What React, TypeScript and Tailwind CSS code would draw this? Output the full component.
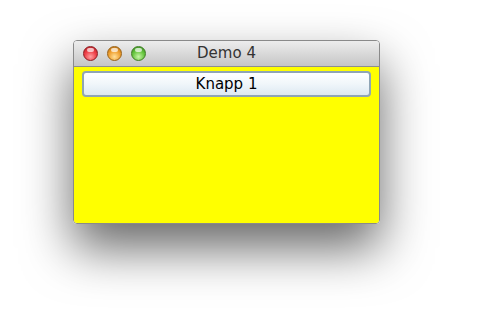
export default function App() {
  const lights = [
    'bg-[radial-gradient(circle_at_50%_75%,#ffa0a0_0%,#ee4048_50%,#b01d22_100%)] border-[#8e1b1f]',
    'bg-[radial-gradient(circle_at_50%_75%,#ffe09a_0%,#f0a030_50%,#b06a10_100%)] border-[#9a6115]',
    'bg-[radial-gradient(circle_at_50%_75%,#c8f5a8_0%,#68c640_50%,#33841e_100%)] border-[#3f7f24]',
  ];

  return (
    <div className="w-[491px] h-[323px] bg-white pt-[40px] pl-[73px] font-['DejaVu_Sans',sans-serif]">
      <div className="w-[307px] h-[184px] flex flex-col rounded-[4px] overflow-hidden shadow-[0_24px_50px_rgba(0,0,0,0.6)] border border-[#8a8a8a]">
        <div className="h-[26px] shrink-0 relative flex items-center bg-gradient-to-b from-[#ededed] to-[#c6c6c6] border-b border-[#8f8f8f]">
          <div className="flex items-center gap-[9px] pl-[9px]">
            {lights.map((c, i) => (
              <div key={i} className={`w-[15px] h-[15px] rounded-full border relative ${c}`}>
                <div className="absolute left-[3px] top-[1px] w-[7px] h-[4px] rounded-full bg-white/70" />
              </div>
            ))}
          </div>
          <div className="absolute inset-0 flex items-center justify-center text-[15px] text-[#333] pointer-events-none">
            Demo 4
          </div>
        </div>
        <div className="flex-1 bg-[#ffff00] px-[8px] pt-[4px]">
          <div className="h-[26px] rounded-[4px] border-2 border-[#8fa5b6] bg-gradient-to-b from-[#ffffff] via-[#f0f6fa] to-[#dde9f2] flex items-center justify-center text-[15px] text-black">
            Knapp 1
          </div>
        </div>
      </div>
    </div>
  );
}
